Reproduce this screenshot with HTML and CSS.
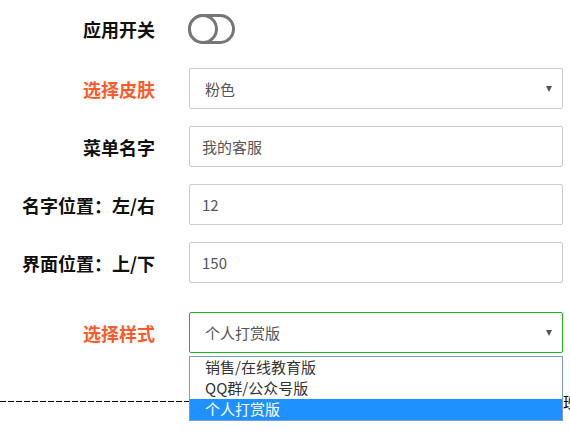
FILE: index.html
```html
<!DOCTYPE html>
<html lang="zh-CN">
<head>
<meta charset="utf-8">
<title>设置</title>
<link rel="stylesheet" href="styles.css">
</head>
<body>
<div class="form">
  <div class="row row-toggle">
    <label class="lbl">应用开关</label>
    <div class="ctl">
      <svg class="toggle" width="48" height="30" viewBox="0 0 48 30">
        <rect x="1.5" y="1.5" width="44" height="27" rx="13.5" ry="13.5" fill="#fff" stroke="#767676" stroke-width="3"/>
        <circle cx="15" cy="15" r="13.5" fill="#fff" stroke="#767676" stroke-width="3"/>
      </svg>
    </div>
  </div>
  <div class="row">
    <label class="lbl red">选择皮肤</label>
    <div class="ctl"><div class="field select">粉色<span class="arrow"></span></div></div>
  </div>
  <div class="row">
    <label class="lbl">菜单名字</label>
    <div class="ctl"><div class="field">我的客服</div></div>
  </div>
  <div class="row">
    <label class="lbl">名字位置：左/右</label>
    <div class="ctl"><div class="field">12</div></div>
  </div>
  <div class="row">
    <label class="lbl">界面位置：上/下</label>
    <div class="ctl"><div class="field">150</div></div>
  </div>
  <div class="row row-style">
    <label class="lbl red">选择样式</label>
    <div class="ctl has-menu">
      <div class="field select active">个人打赏版<span class="arrow"></span></div>
      <ul class="menu">
        <li>销售/在线教育版</li>
        <li>QQ群/公众号版</li>
        <li class="sel">个人打赏版</li>
      </ul>
    </div>
  </div>
  <div class="divider">
    <span class="line"></span><span class="tail">班</span>
  </div>
</div>
</body>
</html>
```
FILE: styles.css
```css
html, body {
  margin: 0;
  padding: 0;
  overflow: hidden;
  background: #fff;
}
body {
  width: 570px;
  height: 435px;
  font-family: "Noto Sans CJK SC", "Open Sans", sans-serif;
}
.form {
  padding-top: 9px;
}
.row {
  display: flex;
  align-items: center;
  height: 41px;
  margin-bottom: 17px;
}
.row-toggle {
  height: 40px;
  margin-bottom: 19px;
}
.row-style {
  margin-top: 29px;
  margin-bottom: 0;
}
.lbl {
  width: 155px;
  flex: none;
  text-align: right;
  font-size: 18px;
  font-weight: bold;
  color: #111;
  white-space: nowrap;
}
.lbl.red {
  color: #ff5a2a;
}
.ctl {
  margin-left: 34px;
  width: 374px;
  flex: none;
  position: relative;
}
.toggle {
  display: block;
  margin-left: -1px;
}
.field {
  box-sizing: border-box;
  height: 41px;
  border: 1px solid #cccccc;
  border-radius: 2px;
  padding-left: 12px;
  font-size: 15px;
  line-height: 39px;
  color: #555;
  position: relative;
}
.field.select {
  padding-left: 15px;
}
.field.active {
  border-color: #1fb51f;
}
.arrow {
  position: absolute;
  right: 10px;
  top: 17px;
  width: 0;
  height: 0;
  border-left: 3.5px solid transparent;
  border-right: 3.5px solid transparent;
  border-top: 6px solid #555;
}
.menu {
  position: absolute;
  left: 0;
  top: 44px;
  width: 374px;
  box-sizing: border-box;
  margin: 0;
  padding: 0;
  list-style: none;
  border: 1px solid #7b9bd4;
  background: #fff;
  z-index: 2;
}
.menu li {
  height: 21px;
  line-height: 20px;
  padding-left: 15px;
  font-size: 15px;
  color: #333;
}
.menu li.sel {
  background: #1e90ff;
  color: #fff;
}
.divider {
  display: flex;
  align-items: center;
  margin-top: 40px;
  height: 16px;
  white-space: nowrap;
}
.line {
  flex: none;
  width: 562px;
  height: 1px;
  background: repeating-linear-gradient(to right, #000 0 6px, transparent 6px 8px);
}
.tail {
  flex: none;
  font-size: 16px;
  line-height: 16px;
  color: #000;
  margin-left: 1px;
}
```
